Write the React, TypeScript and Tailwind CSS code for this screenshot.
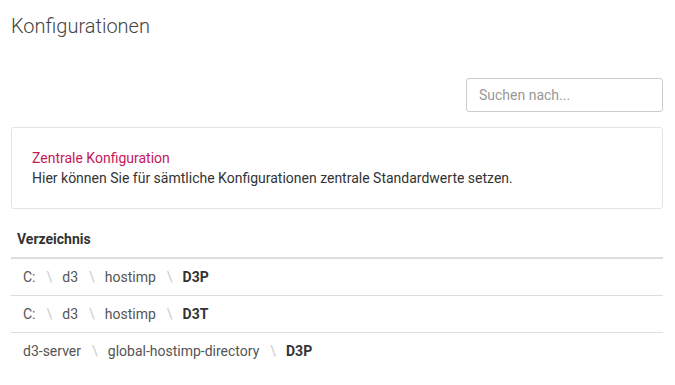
const rows: string[][] = [
  ["C:", "d3", "hostimp", "D3P"],
  ["C:", "d3", "hostimp", "D3T"],
  ["d3-server", "global-hostimp-directory", "D3P"],
];

function Crumbs({ parts }: { parts: string[] }) {
  return (
    <div className="flex items-center">
      {parts.map((p, i) => {
        const last = i === parts.length - 1;
        return (
          <span key={i} className="flex items-center">
            {i > 0 && <span className="pl-[11px] pr-[10px] text-[#cccccc]">\</span>}
            <span className={last ? "font-bold text-[#333333]" : "text-[#555555]"}>{p}</span>
          </span>
        );
      })}
    </div>
  );
}

export default function App() {
  return (
    <div
      className="min-h-screen bg-white px-[11px] pr-[12px] text-[14px] text-[#333333]"
      style={{ fontFamily: "Roboto, 'Liberation Sans', sans-serif" }}
    >
      <h1 className="pt-[11px] text-[20px] leading-[30px] font-light text-[#444444]">Konfigurationen</h1>

      <div className="mt-[37px] flex justify-end">
        <input
          placeholder="Suchen nach..."
          className="h-[34px] w-[197px] rounded-[3px] border border-[#cccccc] px-[12px] text-[14px] text-[#555555] placeholder:text-[#999999] outline-none"
        />
      </div>

      <div className="mt-[15px] rounded-[3px] border border-[#e3e3e3] px-[20px] py-[20px]">
        <div className="leading-[20px] text-[#c7175b]">Zentrale Konfiguration</div>
        <div className="leading-[20px] text-[#333333]">
          Hier können Sie für sämtliche Konfigurationen zentrale Standardwerte setzen.
        </div>
      </div>

      <div className="mt-[12px]">
        <div className="border-b-2 border-[#dddddd] px-[6px] py-[8px] leading-[20px] font-bold text-[#333333]">
          Verzeichnis
        </div>
        {rows.map((r, i) => (
          <div
            key={i}
            className={
              "px-[12px] py-[8px] leading-[20px] " + (i < rows.length - 1 ? "border-b border-[#dddddd]" : "")
            }
          >
            <Crumbs parts={r} />
          </div>
        ))}
      </div>
    </div>
  );
}
